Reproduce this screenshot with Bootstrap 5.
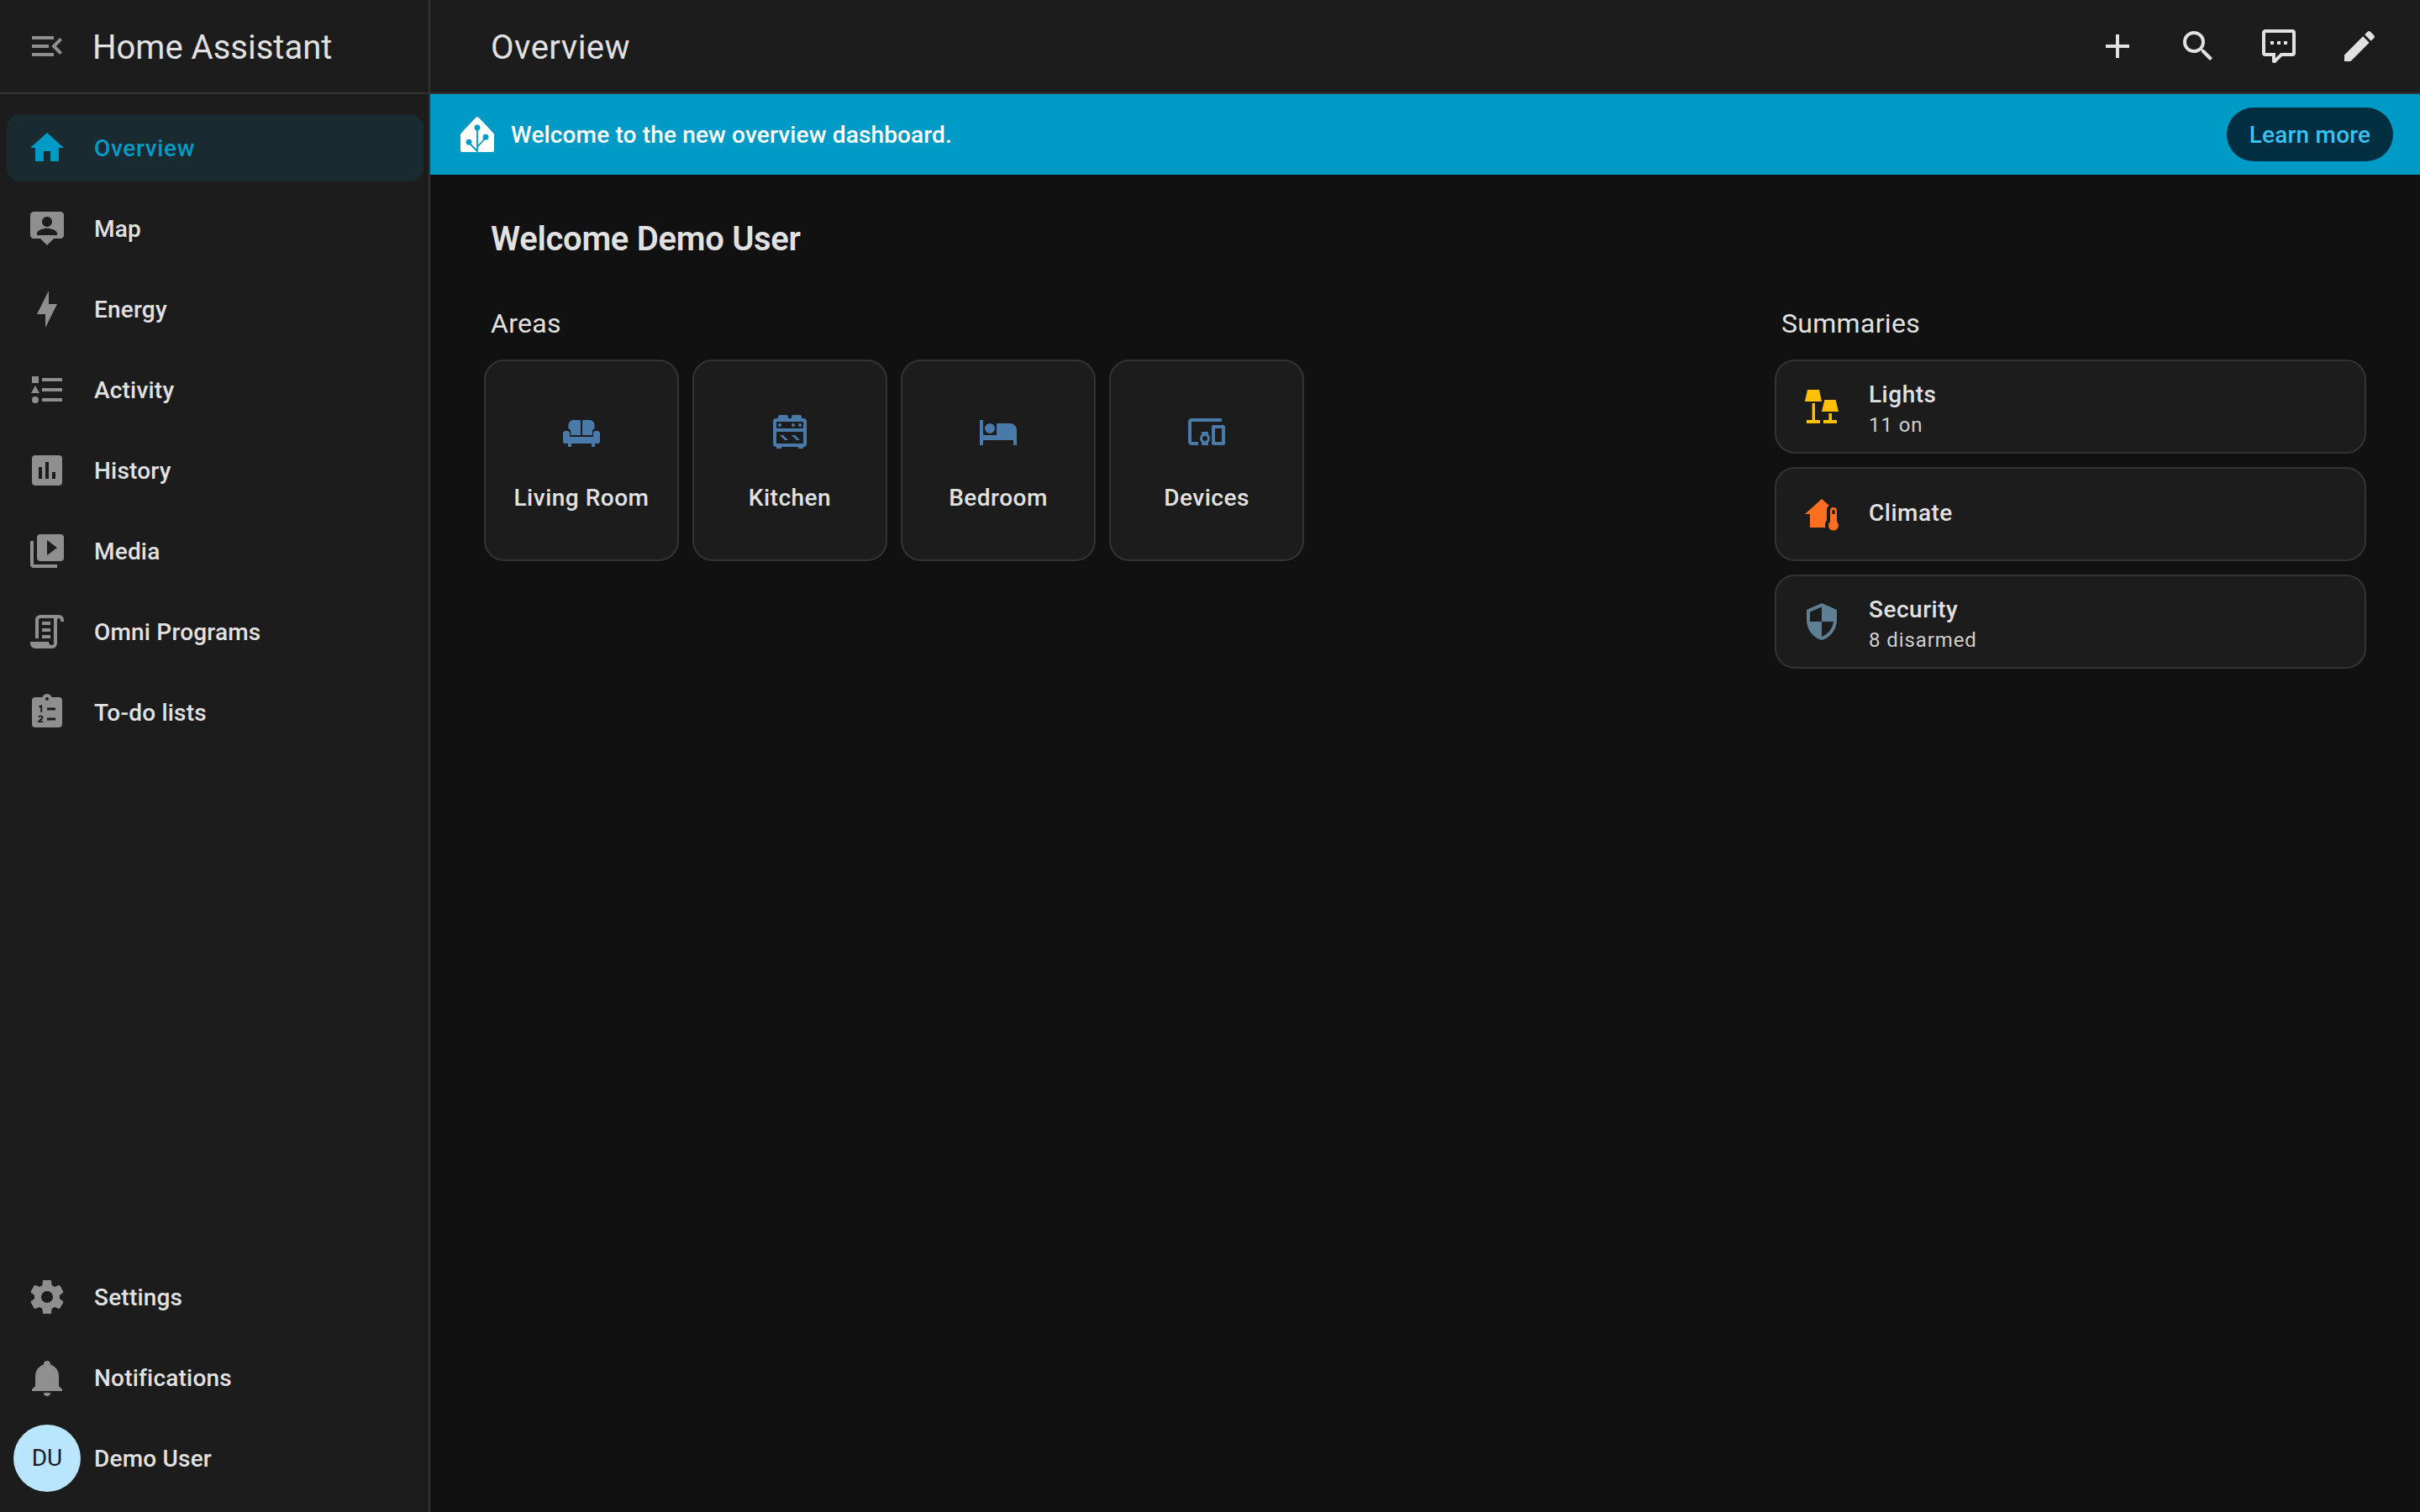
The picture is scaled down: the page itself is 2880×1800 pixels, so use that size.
<!DOCTYPE html>
<html lang="en">
  <head>
    <meta charset="UTF-8" />
    <meta name="viewport" content="width=device-width, initial-scale=1.0" />
    <title>Overview - Home Assistant</title>
    <link href="https://cdn.jsdelivr.net/npm/bootstrap@5.3.0/dist/css/bootstrap.min.css" rel="stylesheet">
    <script src="https://cdn.jsdelivr.net/npm/bootstrap@5.3.0/dist/js/bootstrap.bundle.min.js"></script>
    <style>
      html, body {
        height: 100%;
      }

      body {
        margin: 0;
        background-color: #111111;
        color: #e1e1e1;
        font-family: Roboto, "Liberation Sans", sans-serif;
        overflow: hidden;
      }

      .ic {
        width: 48px;
        height: 48px;
        flex: none;
        fill: currentColor;
      }

      .lamp-ic { color: #ffc107; }
      .climate-ic { color: #ff6f22; }
      .shield-ic { color: #5f7f93; }

      /* sidebar */
      .ha-side {
        width: 512px;
        height: 100vh;
        flex: none;
        background-color: #1c1c1c;
        border-right: 2px solid #333333;
      }

      .side-top {
        height: 112px;
        flex: none;
        padding-left: 32px;
        gap: 30px;
        border-bottom: 2px solid #333333;
        margin-right: -2px;
      }

      .side-top .ic {
        color: #8f8f8f;
      }

      .top-title {
        padding-top: 4px;
        font-size: 40px;
        font-weight: 400;
        line-height: 48px;
        color: #e1e1e1;
      }

      .main-top .top-title {
        letter-spacing: 0.5px;
      }

      .side-list {
        padding-top: 24px;
        gap: 16px;
      }

      .side-foot {
        padding-bottom: 24px;
        gap: 16px;
      }

      .ha-item {
        height: 80px;
        margin: 0 6px 0 8px;
        padding: 0 0 0 24px;
        gap: 32px;
        border-radius: 16px;
        color: #e1e1e1;
        font-size: 28px;
        font-weight: 500;
        letter-spacing: 0.2px;
      }

      .ha-item:hover,
      .ha-item:focus {
        color: #e1e1e1;
      }

      .ha-item .ic {
        color: #8f8f8f;
      }

      .ha-item.active,
      .ha-item.active:hover,
      .ha-item.active:focus {
        background-color: #1a2a31;
        color: #009ac7;
        letter-spacing: 0.65px;
      }

      .ha-item.active .ic {
        color: #009ac7;
      }

      .ha-item.user-item {
        padding-left: 8px;
        gap: 16px;
      }

      .lbl {
        padding-top: 2px;
      }

      .user-pic {
        width: 80px;
        height: 80px;
        flex: none;
        background-color: #b9e6fc;
        color: #1c1c1c;
        font-size: 28px;
        font-weight: 400;
        letter-spacing: 0;
      }

      /* main column */
      .main-top {
        height: 112px;
        flex: none;
        padding: 0 48px 0 72px;
        background-color: #1c1c1c;
        border-bottom: 2px solid #333333;
      }

      .top-actions {
        gap: 48px;
        color: #e1e1e1;
      }

      .welcome-bar {
        height: 96px;
        flex: none;
        padding: 0 32px;
        gap: 16px;
        background-color: #009ac7;
        color: #ffffff;
        font-size: 28px;
        font-weight: 500;
        letter-spacing: 0.15px;
      }

      .bar-text {
        padding-top: 2px;
      }

      .learn-btn {
        width: 198px;
        height: 64px;
        padding: 2px 0 0;
        background-color: #012f41;
        border: 0;
        border-radius: 32px;
        color: #37c3f5;
        font-size: 28px;
        font-weight: 500;
        letter-spacing: 0.2px;
      }

      .learn-btn:hover {
        background-color: #012f41;
        color: #37c3f5;
      }

      .page-body {
        padding: 0 64px;
      }

      .hello {
        margin: 53px 0 0 72px;
        font-size: 40px;
        font-weight: 600;
        line-height: 48px;
        letter-spacing: -0.3px;
      }

      .sec-title {
        height: 52px;
        margin: 0;
        padding: 1px 0 0 8px;
        font-size: 32px;
        font-weight: 400;
        line-height: 48px;
        letter-spacing: 0.3px;
      }

      .sec-wrap {
        padding-top: 51px;
      }

      .sec-wrap .sec-title {
        margin-bottom: 16px;
      }

      .area-tile {
        width: 232px;
        height: 240px;
        padding-top: 60px;
        background-color: #1c1c1c;
        border: 2px solid #333333;
        border-radius: 24px;
        color: #e1e1e1;
        font-size: 28px;
        font-weight: 500;
        letter-spacing: 0.5px;
      }

      .area-tile .ic {
        color: #4a7aa9;
      }

      .area-tile span {
        margin-top: 35px;
        line-height: 40px;
      }

      .sum-col {
        width: 704px;
      }

      .sum-tile {
        height: 112px;
        padding-left: 30px;
        gap: 32px;
        background-color: #1c1c1c;
        border: 2px solid #333333;
        border-radius: 24px;
      }

      .sum-text {
        padding-top: 4px;
      }

      .sum-one {
        padding-bottom: 3px;
      }

      .sum-name {
        font-size: 28px;
        font-weight: 500;
        line-height: 40px;
        letter-spacing: 0.5px;
      }

      .sum-sub {
        font-size: 24px;
        font-weight: 400;
        line-height: 32px;
        letter-spacing: 0.9px;
        color: #cfcfcf;
      }
    </style>
  </head>
  <body class="d-flex">

    <aside class="ha-side d-flex flex-column">
      <div class="side-top d-flex align-items-center">
        <svg class="ic" viewBox="0 0 24 24"><path d="M21,15.61L19.59,17L14.58,12L19.59,7L21,8.39L17.44,12L21,15.61M3,6H16V8H3V6M3,13V11H13V13H3M3,18V16H16V18H3Z"/></svg>
        <span class="top-title">Home Assistant</span>
      </div>

      <nav class="nav flex-column flex-nowrap side-list flex-grow-1">
        <a class="nav-link active ha-item d-flex align-items-center" href="#">
          <svg class="ic" viewBox="0 0 24 24"><path d="M10,20V14H14V20H19V12H22L12,3L2,12H5V20H10Z"/></svg>
          <span class="lbl">Overview</span>
        </a>
        <a class="nav-link ha-item d-flex align-items-center" href="#">
          <svg class="ic" viewBox="0 0 24 24"><path d="M20 2H4C2.9 2 2 2.9 2 4V16C2 17.1 2.9 18 4 18H8L12 22L16 18H20C21.1 18 22 17.1 22 16V4C22 2.9 21.1 2 20 2M12 5C13.66 5 15 6.34 15 8S13.66 11 12 11 9 9.66 9 8 10.34 5 12 5M18 16H6V15C6 13 10 11.9 12 11.9S18 13 18 15V16Z"/></svg>
          <span class="lbl">Map</span>
        </a>
        <a class="nav-link ha-item d-flex align-items-center" href="#">
          <svg class="ic" viewBox="0 0 24 24"><path d="M11 15H6L13 1V9H18L11 23V15Z"/></svg>
          <span class="lbl">Energy</span>
        </a>
        <a class="nav-link ha-item d-flex align-items-center" href="#">
          <svg class="ic" viewBox="0 0 24 24"><path d="M5,9.5L7.5,14H2.5L5,9.5M3,4H7V8H3V4M5,20A2,2 0 0,0 7,18A2,2 0 0,0 5,16A2,2 0 0,0 3,18A2,2 0 0,0 5,20M9,5V7H21V5H9M9,19H21V17H9V19M9,13H21V11H9V13Z"/></svg>
          <span class="lbl">Activity</span>
        </a>
        <a class="nav-link ha-item d-flex align-items-center" href="#">
          <svg class="ic" viewBox="0 0 24 24"><path d="M19,3H5A2,2 0 0,0 3,5V19A2,2 0 0,0 5,21H19A2,2 0 0,0 21,19V5A2,2 0 0,0 19,3M9,17H7V10H9V17M13,17H11V7H13V17M17,17H15V13H17V17Z"/></svg>
          <span class="lbl">History</span>
        </a>
        <a class="nav-link ha-item d-flex align-items-center" href="#">
          <svg class="ic" viewBox="0 0 24 24"><path d="M4,6H2V20A2,2 0 0,0 4,22H18V20H4V6M20,2H8A2,2 0 0,0 6,4V16A2,2 0 0,0 8,18H20A2,2 0 0,0 22,16V4A2,2 0 0,0 20,2M12,14.5V5.5L18,10L12,14.5Z"/></svg>
          <span class="lbl">Media</span>
        </a>
        <a class="nav-link ha-item d-flex align-items-center" href="#">
          <svg class="ic" viewBox="0 0 24 24"><path d="M15,20A1,1 0 0,0 16,19V4H8A1,1 0 0,0 7,5V16H5V5A3,3 0 0,1 8,2H19A3,3 0 0,1 22,5V6H20V5A1,1 0 0,0 19,4A1,1 0 0,0 18,5V9L18,19A3,3 0 0,1 15,22H5A3,3 0 0,1 2,19V18H13A2,2 0 0,0 15,20M9,6H14V8H9V6M9,10H14V12H9V10M9,14H14V16H9V14Z"/></svg>
          <span class="lbl">Omni Programs</span>
        </a>
        <a class="nav-link ha-item d-flex align-items-center" href="#">
          <svg class="ic" viewBox="0 0 24 24">
            <path d="M19,3H14.82C14.4,1.84 13.3,1 12,1C10.7,1 9.6,1.84 9.18,3H5A2,2 0 0,0 3,5V19A2,2 0 0,0 5,21H19A2,2 0 0,0 21,19V5A2,2 0 0,0 19,3M12,3A1,1 0 0,1 13,4A1,1 0 0,1 12,5A1,1 0 0,1 11,4A1,1 0 0,1 12,3Z" fill-rule="evenodd"/>
            <path d="M12 9.2H17V10.8H12ZM12 15.2H17V16.8H12Z" fill="#1c1c1c"/>
            <path d="M7.2 8.8L8.6 8.2V12M7 14.8C7.6 14 9.4 14.2 9.3 15.2C9.2 16 7.6 16.6 7 17.6H9.6" fill="none" stroke="#1c1c1c" stroke-width="0.9"/>
          </svg>
          <span class="lbl">To-do lists</span>
        </a>
      </nav>

      <div class="side-foot nav flex-column flex-nowrap">
        <a class="nav-link ha-item d-flex align-items-center" href="#">
          <svg class="ic" viewBox="0 0 24 24"><path d="M12,15.5A3.5,3.5 0 0,1 8.5,12A3.5,3.5 0 0,1 12,8.5A3.5,3.5 0 0,1 15.5,12A3.5,3.5 0 0,1 12,15.5M19.43,12.97C19.47,12.65 19.5,12.33 19.5,12C19.5,11.67 19.47,11.34 19.43,11L21.54,9.37C21.73,9.22 21.78,8.95 21.66,8.73L19.66,5.27C19.54,5.05 19.27,4.96 19.05,5.05L16.56,6.05C16.04,5.66 15.5,5.32 14.87,5.07L14.5,2.42C14.46,2.18 14.25,2 14,2H10C9.75,2 9.54,2.18 9.5,2.42L9.13,5.07C8.5,5.32 7.96,5.66 7.44,6.05L4.95,5.05C4.73,4.96 4.46,5.05 4.34,5.27L2.34,8.73C2.21,8.95 2.27,9.22 2.46,9.37L4.57,11C4.53,11.34 4.5,11.67 4.5,12C4.5,12.33 4.53,12.65 4.57,12.97L2.46,14.63C2.27,14.78 2.21,15.05 2.34,15.27L4.34,18.73C4.46,18.95 4.73,19.03 4.95,18.95L7.44,17.94C7.96,18.34 8.5,18.68 9.13,18.93L9.5,21.58C9.54,21.82 9.75,22 10,22H14C14.25,22 14.46,21.82 14.5,21.58L14.87,18.93C15.5,18.67 16.04,18.34 16.56,17.94L19.05,18.95C19.27,19.03 19.54,18.95 19.66,18.73L21.66,15.27C21.78,15.05 21.73,14.78 21.54,14.63L19.43,12.97Z"/></svg>
          <span class="lbl">Settings</span>
        </a>
        <a class="nav-link ha-item d-flex align-items-center" href="#">
          <svg class="ic" viewBox="0 0 24 24"><path d="M21,19V20H3V19L5,17V11C5,7.9 7.03,5.17 10,4.29C10,4.19 10,4.1 10,4A2,2 0 0,1 12,2A2,2 0 0,1 14,4C14,4.1 14,4.19 14,4.29C16.97,5.17 19,7.9 19,11V17L21,19M14,21A2,2 0 0,1 12,23A2,2 0 0,1 10,21"/></svg>
          <span class="lbl">Notifications</span>
        </a>
        <a class="nav-link ha-item user-item d-flex align-items-center" href="#">
          <span class="user-pic rounded-circle d-flex align-items-center justify-content-center">DU</span>
          <span class="lbl">Demo User</span>
        </a>
      </div>
    </aside>

    <main class="flex-grow-1 d-flex flex-column">
      <header class="main-top d-flex align-items-center justify-content-between">
        <span class="top-title">Overview</span>
        <div class="top-actions d-flex">
          <svg class="ic" viewBox="0 0 24 24"><path d="M19,13H13V19H11V13H5V11H11V5H13V11H19V13Z"/></svg>
          <svg class="ic" viewBox="0 0 24 24"><path d="M9.5,3A6.5,6.5 0 0,1 16,9.5C16,11.11 15.41,12.59 14.44,13.73L14.71,14H15.5L20.5,19L19,20.5L14,15.5V14.71L13.73,14.44C12.59,15.41 11.11,16 9.5,16A6.5,6.5 0 0,1 3,9.5A6.5,6.5 0 0,1 9.5,3M9.5,5C7,5 5,7 5,9.5C5,12 7,14 9.5,14C12,14 14,12 14,9.5C14,7 12,5 9.5,5Z"/></svg>
          <svg class="ic" viewBox="0 0 24 24"><path d="M9,22A1,1 0 0,1 8,21V18H4A2,2 0 0,1 2,16V4C2,2.89 2.9,2 4,2H20A2,2 0 0,1 22,4V16A2,2 0 0,1 20,18H13.9L10.2,21.71C10,21.9 9.75,22 9.5,22V22H9M10,16V19.08L13.08,16H20V4H4V16H10M17,11H15V9H17V11M13,11H11V9H13V11M9,11H7V9H9V11Z"/></svg>
          <svg class="ic" viewBox="0 0 24 24"><path d="M20.71,7.04C21.1,6.65 21.1,6 20.71,5.63L18.37,3.29C18,2.9 17.35,2.9 16.96,3.29L15.12,5.12L18.87,8.87M3,17.25V21H6.75L17.81,9.93L14.06,6.18L3,17.25Z"/></svg>
        </div>
      </header>

      <div class="welcome-bar d-flex align-items-center">
        <svg class="ic" viewBox="0 0 24 24">
          <path d="M11 2.1C11.6 1.4 12.4 1.4 13 2.1L21.4 11C21.8 11.4 22 11.9 22 12.4V21.5C22 22.1 21.6 22.5 21 22.5H3C2.4 22.5 2 22.1 2 21.5V12.4C2 11.9 2.2 11.4 2.6 11Z"/>
          <path d="M12 8V22.5M12 19.5L17 14M12 22L7 17" fill="none" stroke="#009ac7" stroke-width="0.9"/>
          <circle cx="12" cy="8" r="1.7" fill="#009ac7"/>
          <circle cx="17" cy="13.6" r="1.7" fill="#009ac7"/>
          <circle cx="7" cy="16.6" r="1.7" fill="#009ac7"/>
        </svg>
        <span class="bar-text flex-grow-1">Welcome to the new overview dashboard.</span>
        <button type="button" class="btn learn-btn d-flex align-items-center justify-content-center">Learn more</button>
      </div>

      <h1 class="hello">Welcome Demo User</h1>

      <div class="page-body d-flex justify-content-between">
        <section class="sec-wrap">
          <h2 class="sec-title">Areas</h2>
          <div class="d-flex gap-3">
            <div class="area-tile d-flex flex-column align-items-center">
              <svg class="ic" viewBox="0 0 24 24"><path transform="translate(0 1)" d="M4.2 7A3 3 0 0 1 7 4H10.8A.7.7 0 0 1 11.5 4.7V13H5.6V11A2 2 0 0 0 4.2 9.1ZM12.5 4.7A.7.7 0 0 1 13.2 4H17A3 3 0 0 1 19.8 7V9.1A2 2 0 0 0 18.4 11V13H12.5ZM1 11.4A2.4 2.4 0 0 1 5 11.4V14H19V11.4A2.4 2.4 0 0 1 23 11.4V16.6A1.4 1.4 0 0 1 21.6 18H20V20H18V18H6V20H4V18H2.4A1.4 1.4 0 0 1 1 16.6Z"/></svg>
              <span>Living Room</span>
            </div>
            <div class="area-tile d-flex flex-column align-items-center">
              <svg class="ic" viewBox="0 0 24 24"><path d="M6,14H8L11,17H9L6,14M4,4H5V3A1,1 0 0,1 6,2H10A1,1 0 0,1 11,3V4H13V3A1,1 0 0,1 14,2H18A1,1 0 0,1 19,3V4H20A2,2 0 0,1 22,6V19A2,2 0 0,1 20,21V22H17V21H7V22H4V21A2,2 0 0,1 2,19V6A2,2 0 0,1 4,4M18,7A1,1 0 0,1 19,8A1,1 0 0,1 18,9A1,1 0 0,1 17,8A1,1 0 0,1 18,7M14,7A1,1 0 0,1 15,8A1,1 0 0,1 14,9A1,1 0 0,1 13,8A1,1 0 0,1 14,7M20,6H4V10H20V6M4,19H20V12H4V19M6,7A1,1 0 0,1 7,8A1,1 0 0,1 6,9A1,1 0 0,1 5,8A1,1 0 0,1 6,7M13,14H15L18,17H16L13,14Z"/></svg>
              <span>Kitchen</span>
            </div>
            <div class="area-tile d-flex flex-column align-items-center">
              <svg class="ic" viewBox="0 0 24 24"><path d="M19,7H11V14H3V5H1V20H3V17H21V20H23V11A4,4 0 0,0 19,7M7,13A3,3 0 0,0 10,10A3,3 0 0,0 7,7A3,3 0 0,0 4,10A3,3 0 0,0 7,13Z"/></svg>
              <span>Bedroom</span>
            </div>
            <div class="area-tile d-flex flex-column align-items-center">
              <svg class="ic" viewBox="0 0 24 24"><path d="M3 6H21V4H3C1.9 4 1 4.9 1 6V18C1 19.1 1.9 20 3 20H7V18H3V6M13 12H9V13.78C8.39 14.33 8 15.11 8 16C8 16.89 8.39 17.67 9 18.22V20H13V18.22C13.61 17.67 14 16.88 14 16S13.61 14.33 13 13.78V12M11 17.5C10.17 17.5 9.5 16.83 9.5 16S10.17 14.5 11 14.5 12.5 15.17 12.5 16 11.83 17.5 11 17.5M22 8H16C15.5 8 15 8.5 15 9V19C15 19.5 15.5 20 16 20H22C22.5 20 23 19.5 23 19V9C23 8.5 22.5 8 22 8M21 18H17V10H21V18Z"/></svg>
              <span>Devices</span>
            </div>
          </div>
        </section>

        <section class="sec-wrap sum-col">
          <h2 class="sec-title">Summaries</h2>
          <div class="d-flex flex-column gap-3">
            <div class="sum-tile d-flex align-items-center">
              <svg class="ic lamp-ic" viewBox="0 0 24 24"><path d="M3.5 2H10.5L12 9H2ZM6.3 10H8V20H11V22H3V20H6.3ZM13.7 8H20.3L22 15H12ZM16.2 16H18V20H21V22H13V20H16.2Z"/></svg>
              <div class="sum-text">
                <div class="sum-name">Lights</div>
                <div class="sum-sub">11 on</div>
              </div>
            </div>
            <div class="sum-tile d-flex align-items-center">
              <svg class="ic climate-ic" viewBox="0 0 24 24"><path d="M12 3L2 12H5V20H14.2C14 19.4 14 19 14 18.5C14 17.4 14.4 16.5 15 15.7V9.5C15 8.4 15.6 7.4 16.4 6.9L12 3ZM19 8A2 2 0 0 0 17 10V16.5A3 3 0 1 0 21 16.5V10A2 2 0 0 0 19 8ZM19 9.5A.7.7 0 0 1 19.8 10.2V12H18.2V10.2A.7.7 0 0 1 19 9.5Z" fill-rule="evenodd"/></svg>
              <div class="sum-one">
                <div class="sum-name">Climate</div>
              </div>
            </div>
            <div class="sum-tile d-flex align-items-center">
              <svg class="ic shield-ic" viewBox="0 0 24 24"><path d="M12,12H19C18.47,16.11 15.72,19.78 12,20.92V12H5V6.3L12,3.19M12,1L3,5V11C3,16.55 6.84,21.73 12,23C17.16,21.73 21,16.55 21,11V5L12,1Z"/></svg>
              <div class="sum-text">
                <div class="sum-name">Security</div>
                <div class="sum-sub">8 disarmed</div>
              </div>
            </div>
          </div>
        </section>
      </div>
    </main>

  </body>
</html>
